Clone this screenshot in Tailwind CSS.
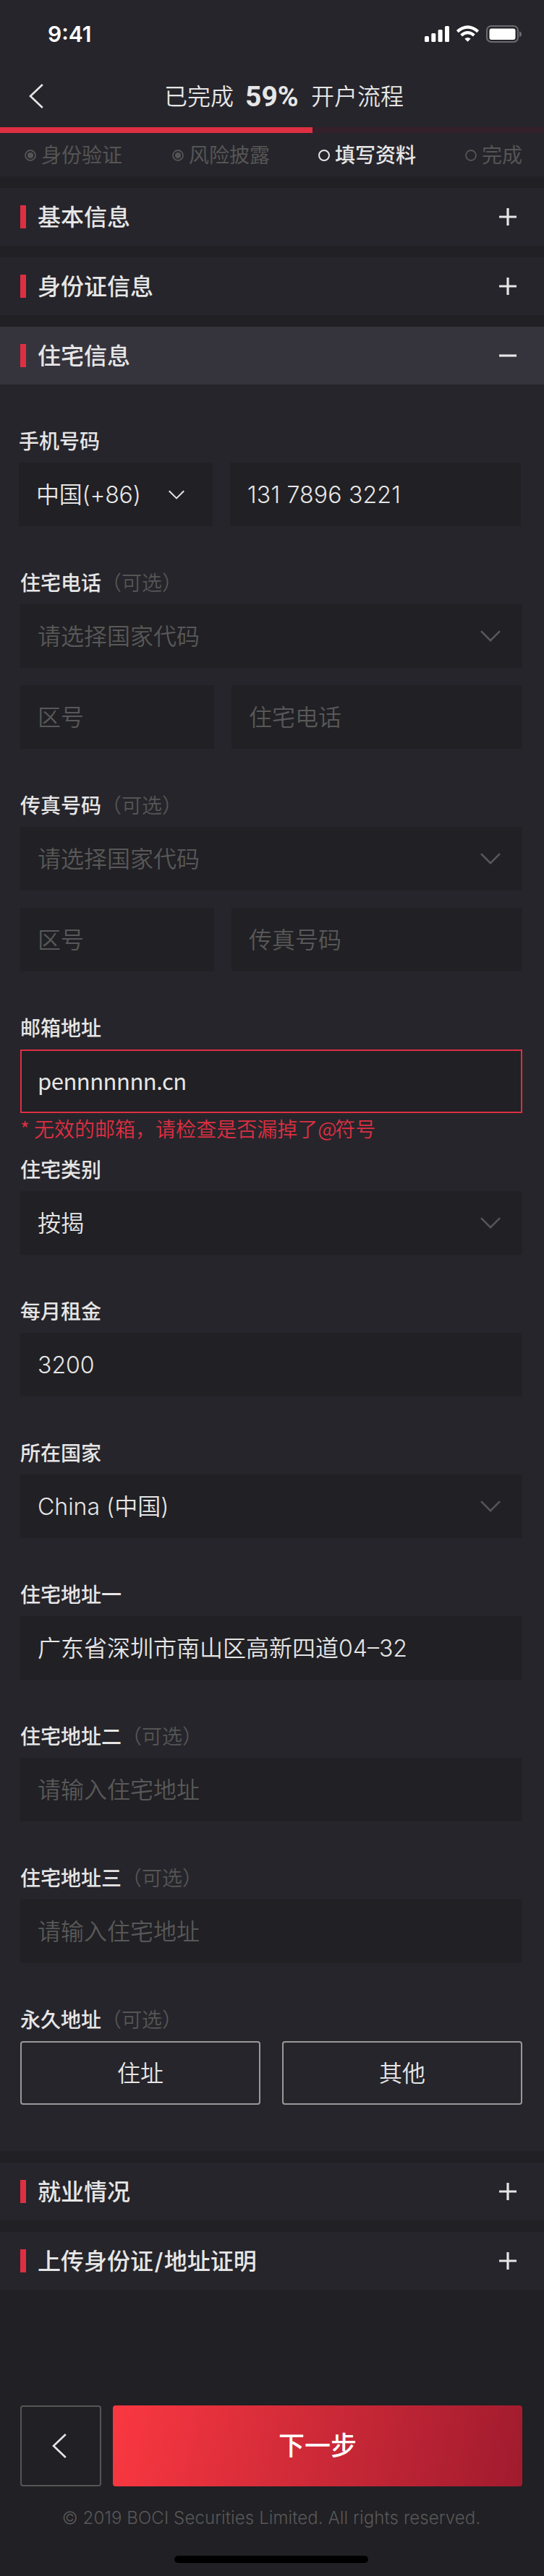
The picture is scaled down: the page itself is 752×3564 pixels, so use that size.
<!DOCTYPE html>
<html lang="zh-CN">
<head>
<meta charset="utf-8">
<title>开户流程</title>
<script src="https://cdn.jsdelivr.net/npm/@tailwindcss/browser@4"></script>
</head>
<body class="w-[752px] bg-[#212024] font-['Inter','Noto_Sans_CJK_SC',sans-serif] text-[32px] leading-[40px] text-[#e6e6e6] whitespace-nowrap">

<svg class="hidden">
  <symbol id="chev" viewBox="0 0 28 16"><path d="M1 1.2 14 14.2 27 1.2" fill="none" stroke="currentColor" stroke-width="2.6"/></symbol>
  <symbol id="back" viewBox="0 0 20 34"><path d="M18.8 1 2 17l16.8 16" fill="none" stroke="currentColor" stroke-width="2.6"/></symbol>
  <symbol id="plus" viewBox="0 0 24 24"><path d="M0 12h24M12 0v24" stroke="currentColor" stroke-width="3.2"/></symbol>
  <symbol id="minus" viewBox="0 0 24 24"><path d="M0 12h24" stroke="currentColor" stroke-width="3.2"/></symbol>
</svg>

<header class="bg-[#26252b]">
  <div class="h-[88px] flex items-center pt-[6px] pl-[66px] pr-[31px] justify-between">
    <span class="text-[30px] font-semibold text-white">9:41</span>
    <svg class="w-[134px] h-6" viewBox="0 0 134 24">
      <g fill="#fff">
        <rect x="0" y="15" width="6" height="8" rx="1.5"/><rect x="9.3" y="11" width="6" height="12" rx="1.5"/>
        <rect x="18.6" y="6" width="6" height="17" rx="1.5"/><rect x="28" y="1" width="6" height="22" rx="1.5"/>
        <rect x="89.5" y="4.5" width="36" height="15.5" rx="3"/>
        <path d="M59.500 22.800 L55.300 18.600 Q59.500 15.400 63.700 18.600Z"/>
      </g>
      <path d="M50.600 13.900 Q59.500 6.400 68.400 13.900" fill="none" stroke="#fff" stroke-width="4.200"/>
      <path d="M45.300 8.600 Q59.500 -3.600 73.700 8.600" fill="none" stroke="#fff" stroke-width="4.400"/>
      <rect x="86" y="1" width="43" height="22" rx="6" fill="none" stroke="#6c6b70" stroke-width="2"/>
      <path d="M131 8.200q3 1 3 4t-3 4z" fill="#6c6b70"/>
    </svg>
  </div>
  <div class="h-[88px] flex items-center pl-10 pt-[2px]">
    <svg class="w-5 h-[34px]"><use href="#back"/></svg>
    <div class="ml-[167px] pt-[2px] flex items-center font-[350]">
      <span>已完成</span>
      <span class="ml-[16px] w-[73px] text-[39px] font-bold font-['Roboto']">59%</span>
      <span class="ml-[18px]">开户流程</span>
    </div>
  </div>
  <div class="h-2 bg-[#33202a]"><div class="h-2 w-[432px] bg-[#de2f42]"></div></div>
  <div class="h-[60px] pt-[1px] flex items-center pl-[34px] text-[28px] text-[#555]">
    <div class="w-[204px] flex items-center gap-[7px]">
      <svg class="size-4" viewBox="0 0 16 16"><circle cx="8" cy="8" r="7" fill="none" stroke="currentColor" stroke-width="1.800"/><circle cx="8" cy="8" r="4" fill="currentColor"/></svg>
      <span>身份验证</span>
    </div>
    <div class="w-[202px] flex items-center gap-[7px]">
      <svg class="size-4" viewBox="0 0 16 16"><circle cx="8" cy="8" r="7" fill="none" stroke="currentColor" stroke-width="1.800"/><circle cx="8" cy="8" r="4" fill="currentColor"/></svg>
      <span>风险披露</span>
    </div>
    <div class="w-[203px] flex items-center gap-[7px] text-[#e6e6e6] font-medium">
      <svg class="size-4" viewBox="0 0 16 16"><circle cx="8" cy="8" r="7" fill="none" stroke="currentColor" stroke-width="2"/></svg>
      <span>填写资料</span>
    </div>
    <div class="flex items-center gap-[7px]">
      <svg class="size-4" viewBox="0 0 16 16"><circle cx="8" cy="8" r="7" fill="none" stroke="currentColor" stroke-width="1.800"/></svg>
      <span>完成</span>
    </div>
  </div>
</header>

<div class="mt-4 flex flex-col gap-4 font-medium">
  <div class="h-20 bg-[#26252b] flex items-center pl-7 pr-[38px]"><i class="w-2 h-8 bg-[#de2f42] mr-4"></i><span class="flex-1 pt-[2px]">基本信息</span><svg class="size-6"><use href="#plus"/></svg></div>
  <div class="h-20 bg-[#26252b] flex items-center pl-7 pr-[38px]"><i class="w-2 h-8 bg-[#de2f42] mr-4"></i><span class="flex-1 pt-[2px]">身份证信息</span><svg class="size-6"><use href="#plus"/></svg></div>
  <div class="h-20 bg-[#35343d] flex items-center pl-7 pr-[38px]"><i class="w-2 h-8 bg-[#de2f42] mr-4"></i><span class="flex-1 pt-[2px]">住宅信息</span><svg class="size-6"><use href="#minus"/></svg></div>
</div>

<main class="h-[2444px] bg-[#26252b] pt-12 pl-7 pr-[30px] font-[350]">
  <section class="h-[196px] -ml-[2px] mr-[2px]">
    <div class="h-[60px] pt-[2px] flex items-center text-[28px] font-medium">手机号码</div>
    <div class="flex gap-6">
      <div class="w-[268px] h-[88px] bg-[#212024] pl-6 pr-[39px] flex items-center justify-between"><span class="pt-[2px] tracking-[-0.2px]">中国(+86)</span><svg class="w-[22px] h-[13px]"><use href="#chev"/></svg></div>
      <div class="flex-1 h-[88px] bg-[#212024] pl-6 pt-[2px] flex items-center tracking-[0.2px]">131 7896 3221</div>
    </div>
  </section>

  <section class="h-[308px]">
    <div class="h-[60px] pt-[2px] flex items-center text-[28px]"><span class="font-medium">住宅电话</span><span class="text-[#555]">（可选）</span></div>
    <div class="h-[88px] bg-[#212024] pr-[30px] pl-6 flex items-center justify-between text-[#585858]"><span class="pt-[2px]">请选择国家代码</span><svg class="w-7 h-4"><use href="#chev"/></svg></div>
    <div class="mt-6 flex gap-6 text-[#585858]">
      <div class="w-[268px] h-[88px] bg-[#212024] pl-6 pt-[2px] flex items-center">区号</div>
      <div class="flex-1 h-[88px] bg-[#212024] pl-6 pt-[2px] flex items-center">住宅电话</div>
    </div>
  </section>

  <section class="h-[308px]">
    <div class="h-[60px] pt-[2px] flex items-center text-[28px]"><span class="font-medium">传真号码</span><span class="text-[#555]">（可选）</span></div>
    <div class="h-[88px] bg-[#212024] pr-[30px] pl-6 flex items-center justify-between text-[#585858]"><span class="pt-[2px]">请选择国家代码</span><svg class="w-7 h-4"><use href="#chev"/></svg></div>
    <div class="mt-6 flex gap-6 text-[#585858]">
      <div class="w-[268px] h-[88px] bg-[#212024] pl-6 pt-[2px] flex items-center">区号</div>
      <div class="flex-1 h-[88px] bg-[#212024] pl-6 pt-[2px] flex items-center">传真号码</div>
    </div>
  </section>

  <section class="h-[196px]">
    <div class="h-[60px] pt-[2px] flex items-center text-[28px] font-medium">邮箱地址</div>
    <div class="h-[88px] bg-[#212024] border-2 border-[#de2f42] pl-[22px] pb-[2px] flex items-center font-['Noto_Sans_CJK_SC'] font-normal text-[31px] tracking-[-0.5px]">pennnnnnn.cn</div>
    <div class="h-[42px] flex items-center text-[28px] text-[#de2f42] font-['Noto_Sans_CJK_SC']">* 无效的邮箱，请检查是否漏掉了<span class="tracking-[-2px]">@</span>符号</div>
  </section>

  <section class="h-[196px]">
    <div class="h-[60px] pt-[2px] flex items-center text-[28px] font-medium">住宅类别</div>
    <div class="h-[88px] bg-[#212024] pl-6 pr-[30px] flex items-center justify-between"><span class="pt-[2px]">按揭</span><svg class="w-7 h-4 text-[#555]"><use href="#chev"/></svg></div>
  </section>

  <section class="h-[196px]">
    <div class="h-[60px] pt-[2px] flex items-center text-[28px] font-medium">每月租金</div>
    <div class="h-[88px] bg-[#212024] pl-6 pt-[2px] flex items-center">3200</div>
  </section>

  <section class="h-[196px]">
    <div class="h-[60px] pt-[2px] flex items-center text-[28px] font-medium">所在国家</div>
    <div class="h-[88px] bg-[#212024] pl-6 pr-[30px] flex items-center justify-between"><span class="pt-[2px]">China (中国)</span><svg class="w-7 h-4 text-[#555]"><use href="#chev"/></svg></div>
  </section>

  <section class="h-[196px]">
    <div class="h-[60px] pt-[2px] flex items-center text-[28px] font-medium">住宅地址一</div>
    <div class="h-[88px] bg-[#212024] pl-6 pt-[2px] flex items-center">广东省深圳市南山区高新四道04–32</div>
  </section>

  <section class="h-[196px]">
    <div class="h-[60px] pt-[2px] flex items-center text-[28px]"><span class="font-medium">住宅地址二</span><span class="text-[#555]">（可选）</span></div>
    <div class="h-[88px] bg-[#212024] pl-6 pt-[2px] flex items-center text-[#585858]">请输入住宅地址</div>
  </section>

  <section class="h-[196px]">
    <div class="h-[60px] pt-[2px] flex items-center text-[28px]"><span class="font-medium">住宅地址三</span><span class="text-[#555]">（可选）</span></div>
    <div class="h-[88px] bg-[#212024] pl-6 pt-[2px] flex items-center text-[#585858]">请输入住宅地址</div>
  </section>

  <section>
    <div class="h-[60px] pt-[2px] flex items-center text-[28px]"><span class="font-medium">永久地址</span><span class="text-[#555]">（可选）</span></div>
    <div class="flex gap-[30px]">
      <button class="flex-1 h-[88px] pt-[2px] rounded-[4px] border-2 border-[#999]">住址</button>
      <button class="flex-1 h-[88px] pt-[2px] rounded-[4px] border-2 border-[#999]">其他</button>
    </div>
  </section>
</main>

<div class="mt-4 flex flex-col gap-4 font-medium">
  <div class="h-20 bg-[#26252b] flex items-center pl-7 pr-[38px]"><i class="w-2 h-8 bg-[#de2f42] mr-4"></i><span class="flex-1 pt-[2px]">就业情况</span><svg class="size-6"><use href="#plus"/></svg></div>
  <div class="h-20 bg-[#26252b] flex items-center pl-7 pr-[38px]"><i class="w-2 h-8 bg-[#de2f42] mr-4"></i><span class="flex-1 pt-[2px]">上传身份证<span class="ml-[1.5px] mr-[1.5px]">/</span>地址证明</span><svg class="size-6"><use href="#plus"/></svg></div>
</div>

<footer class="h-[396px] pt-[160px] w-[750px]">
  <div class="flex gap-4 px-7">
    <button class="w-[112px] h-28 rounded-[4px] border-2 border-[#555] flex items-center pl-[42px]"><svg class="w-5 h-[34px]"><use href="#back"/></svg></button>
    <button class="flex-1 h-28 rounded-[4px] bg-[linear-gradient(101deg,#fa3841,#a01b2e)] text-white text-[36px] font-medium">下一步</button>
  </div>
  <div class="mt-6 text-center text-[24px] font-[350] text-[#585858] tracking-[0.1px]">© 2019 BOCI Securities Limited. All rights reserved.</div>
  <div class="mt-8 mx-auto w-[268px] h-[10px] rounded-[5px] bg-black"></div>
</footer>
</body>
</html>
